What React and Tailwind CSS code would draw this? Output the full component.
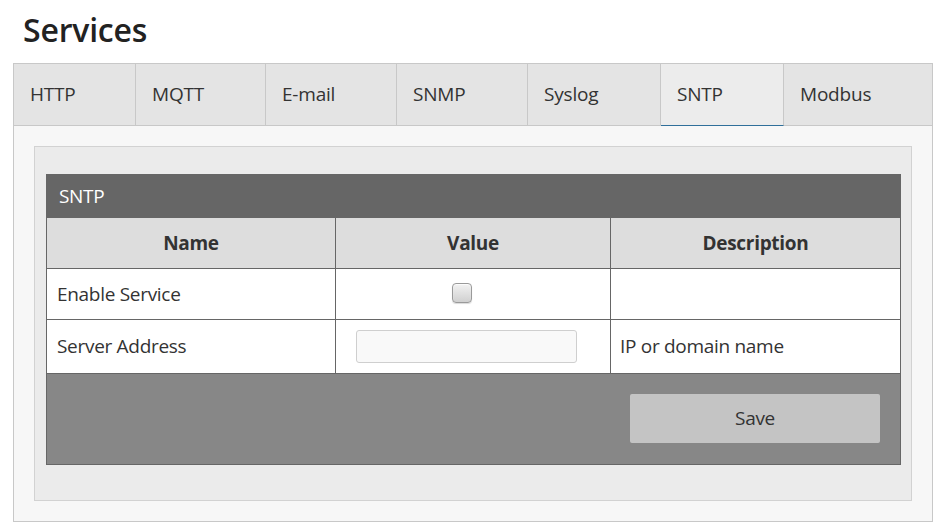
import React from "react";

const tabs = [
  { label: "HTTP", w: "w-[122px]" },
  { label: "MQTT", w: "w-[130px]" },
  { label: "E-mail", w: "w-[131px]" },
  { label: "SNMP", w: "w-[131px]" },
  { label: "Syslog", w: "w-[133px]" },
  { label: "SNTP", w: "w-[123px]", active: true },
  { label: "Modbus", w: "flex-1" },
];

export default function App() {
  return (
    <div className="w-[947px] h-[530px] bg-white text-[#333] font-['Open_Sans',sans-serif] overflow-hidden">
      <h1 className="pl-[23px] pt-[8px] h-[63px] text-[32px] leading-[44px] font-semibold text-[#222] tracking-[-0.2px]">
        Services
      </h1>
      <div className="ml-[13px] w-[920px]">
        <div className="flex h-[63px] border-t border-l border-r border-[#c8c8c8]">
          {tabs.map((t, i) => (
            <div
              key={t.label}
              className={
                t.w +
                " flex items-center pl-[16px] text-[19px] tracking-[-0.2px] " +
                (i < tabs.length - 1 ? "border-r border-r-[#c8c8c8] " : "") +
                (t.active
                  ? "bg-[#ececec] border-b border-b-[#2f6f9a]"
                  : "bg-[#e4e4e4] border-b border-b-[#c8c8c8]")
              }
            >
              {t.label}
            </div>
          ))}
        </div>
        <div className="border-l border-r border-b border-[#c8c8c8] bg-[#f7f7f7] p-[20px] pb-[20px]">
          <div className="border border-[#d2d2d2] bg-[#ebebeb] pl-[11px] pr-[10px] pt-[27px] pb-[35px]">
            <div className="border border-[#666]">
              <div className="h-[43px] bg-[#666] text-white text-[19px] tracking-[-0.3px] flex items-center pl-[12px]">
                SNTP
              </div>
              <div className="grid grid-cols-[289px_275px_1fr] text-[19px] tracking-[-0.3px]">
                <div className="h-[51px] bg-[#dddddd] border-r border-b border-[#666] flex items-center justify-center font-bold">
                  Name
                </div>
                <div className="h-[51px] bg-[#dddddd] border-r border-b border-[#666] flex items-center justify-center font-bold">
                  Value
                </div>
                <div className="h-[51px] bg-[#dddddd] border-b border-[#666] flex items-center justify-center font-bold">
                  Description
                </div>

                <div className="h-[51px] bg-white border-r border-b border-[#666] flex items-center pl-[10px]">
                  Enable Service
                </div>
                <div className="h-[51px] bg-white border-r border-b border-[#666] flex items-center justify-center">
                  <div className="w-[20px] h-[20px] mr-[22px] mb-[3px] rounded-[4px] border border-[#9a9a9a] bg-gradient-to-b from-[#f2f2f2] to-[#d0d0d0] shadow-[inset_0_1px_1px_rgba(255,255,255,0.8),0_1px_1px_rgba(0,0,0,0.15)]" />
                </div>
                <div className="h-[51px] bg-white border-b border-[#666]" />

                <div className="h-[53px] bg-white border-r border-[#666] flex items-center pl-[10px]">
                  Server Address
                </div>
                <div className="h-[53px] bg-white border-r border-[#666] flex items-center pl-[20px]">
                  <input
                    type="text"
                    className="w-[221px] h-[33px] bg-[#f9f9f9] border border-[#cfcfcf] rounded-[3px] outline-none"
                  />
                </div>
                <div className="h-[53px] bg-white flex items-center pl-[9px]">
                  IP or domain name
                </div>
              </div>
              <div className="h-[91px] bg-[#878787] border-t border-[#666] flex justify-end items-start pt-[20px] pr-[20px]">
                <button className="w-[250px] h-[49px] bg-[#c4c4c4] rounded-[2px] text-[19px] text-[#333] tracking-[-0.3px]">
                  Save
                </button>
              </div>
            </div>
          </div>
        </div>
      </div>
    </div>
  );
}
